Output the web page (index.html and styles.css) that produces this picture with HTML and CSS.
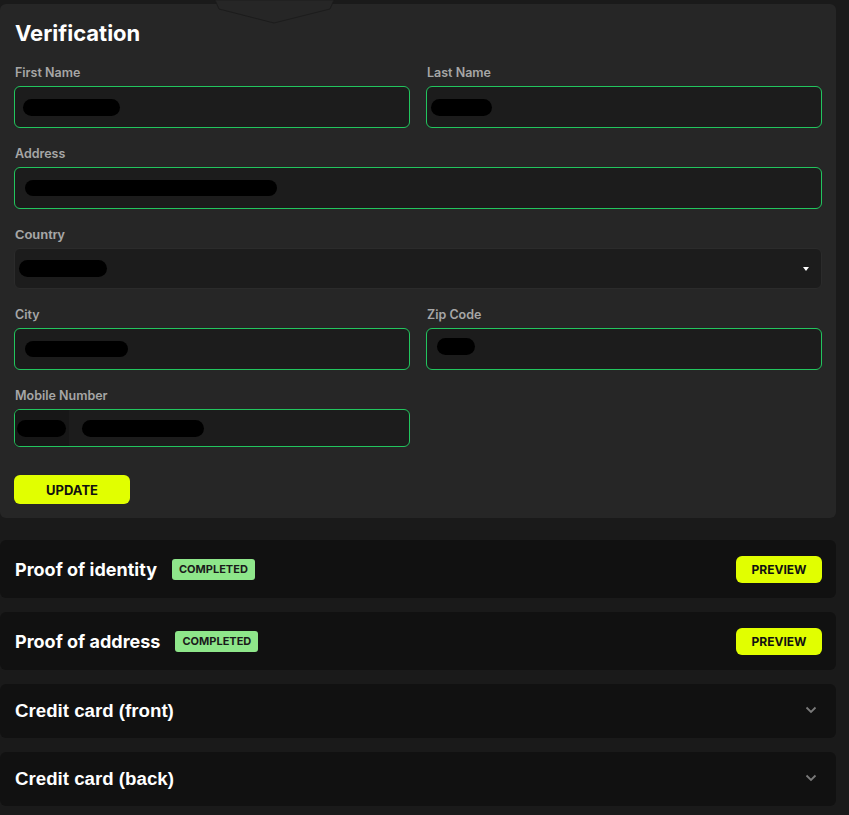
FILE: index.html
```html
<!DOCTYPE html>
<html lang="en">
<head>
    <meta charset="UTF-8">
    <meta name="viewport" content="width=device-width, initial-scale=1.0">
    <title>Verification</title>
    <link rel="stylesheet" href="styles.css">
</head>
<body>
    <div class="page">
        <div class="card">
            <svg class="notch" width="124" height="26" viewBox="0 0 124 26">
                <path d="M1 0 L5 9 L60 23 L116 9 L120 0 Z" fill="#262626" stroke="#1c1c1c" stroke-width="1"/>
            </svg>
            <h1>Verification</h1>

            <div class="grid">
                <div class="field">
                    <label>First Name</label>
                    <div class="input ok"><span class="mask" style="width:97px"></span></div>
                </div>
                <div class="field">
                    <label>Last Name</label>
                    <div class="input ok"><span class="mask m-tight" style="width:61px"></span></div>
                </div>
                <div class="field full">
                    <label>Address</label>
                    <div class="input ok"><span class="mask m-wide" style="width:252px"></span></div>
                </div>
                <div class="field full">
                    <label class="plain">Country</label>
                    <div class="input select">
                        <span class="mask m-left" style="width:88px"></span>
                        <span class="caret"></span>
                    </div>
                </div>
                <div class="field">
                    <label>City</label>
                    <div class="input ok"><span class="mask m-wide" style="width:103px"></span></div>
                </div>
                <div class="field">
                    <label>Zip Code</label>
                    <div class="input ok"><span class="mask m-zip" style="width:38px"></span></div>
                </div>
                <div class="field">
                    <label>Mobile Number</label>
                    <div class="input ok phone">
                        <div class="code"><span class="mask" style="width:49px"></span></div>
                        <span class="mask m-num" style="width:122px"></span>
                    </div>
                </div>
            </div>

            <button class="btn update">UPDATE</button>
        </div>

        <div class="row tall">
            <div class="row-left">
                <h2>Proof of identity</h2>
                <span class="badge">COMPLETED</span>
            </div>
            <button class="btn preview">PREVIEW</button>
        </div>
        <div class="row tall">
            <div class="row-left">
                <h2>Proof of address</h2>
                <span class="badge">COMPLETED</span>
            </div>
            <button class="btn preview">PREVIEW</button>
        </div>
        <div class="row">
            <h2 class="plain">Credit card (front)</h2>
            <svg class="chev" width="12" height="8" viewBox="0 0 12 8"><path d="M1.5 1.5 L6 6 L10.5 1.5" fill="none" stroke="#7a7a7a" stroke-width="1.8"/></svg>
        </div>
        <div class="row">
            <h2 class="plain">Credit card (back)</h2>
            <svg class="chev" width="12" height="8" viewBox="0 0 12 8"><path d="M1.5 1.5 L6 6 L10.5 1.5" fill="none" stroke="#7a7a7a" stroke-width="1.8"/></svg>
        </div>
    </div>
</body>
</html>
```

FILE: styles.css
```css
body {
    margin: 0;
    background: #1a1a1a;
    font-family: Inter, "Noto Sans", sans-serif;
    color: #fff;
}
.page {
    width: 836px;
    padding-top: 4px;
}
.card {
    position: relative;
    background: #262626;
    border-radius: 6px;
    padding: 15px 14px 14px;
}
.notch {
    position: absolute;
    left: 214px;
    top: -4px;
}
h1 {
    margin: 0 0 18px 1px;
    font-size: 22px;
    line-height: 28px;
    font-weight: 700;
}
.grid {
    display: grid;
    grid-template-columns: 1fr 1fr;
    column-gap: 16px;
    row-gap: 18px;
}
.field.full {
    grid-column: 1 / 3;
}
label {
    display: block;
    font-size: 12.5px;
    line-height: 16px;
    font-weight: 600;
    color: #a6a6a6;
    margin: 0 0 5px 1px;
}
label.plain {
    font-family: "Liberation Sans", Arial, sans-serif;
    font-size: 13px;
    font-weight: 700;
}
.input {
    height: 42px;
    box-sizing: border-box;
    background: #1c1c1c;
    border: 1px solid #2b2b2b;
    border-radius: 6px;
    display: flex;
    align-items: center;
    padding: 0 8px;
}
.input.ok {
    border-color: #22c55e;
}
.input.select {
    height: 41px;
    justify-content: space-between;
    padding: 0 12px 0 4px;
}
.mask {
    display: block;
    height: 17px;
    background: #000;
    border-radius: 9px;
}
.m-tight { margin-left: -4px; }
.m-wide { margin-left: 2px; height: 16px; }
.m-zip { margin-left: 2px; margin-top: -6px; }
.m-num { margin-left: 13px; }
.caret {
    width: 0;
    height: 0;
    border-left: 3px solid transparent;
    border-right: 3px solid transparent;
    border-top: 4px solid #fff;
}
.input.phone {
    height: 38px;
    padding: 0;
    overflow: hidden;
}
.code {
    width: 52px;
    align-self: stretch;
    background: #171717;
    display: flex;
    align-items: center;
    padding-left: 2px;
}
.btn {
    border: none;
    border-radius: 6px;
    background: #e1ff00;
    color: #111;
    font-family: Inter, sans-serif;
    font-weight: 700;
    cursor: pointer;
}
.update {
    margin-top: 28px;
    width: 116px;
    height: 29px;
    font-size: 13px;
    display: block;
}
.row {
    background: #111;
    border-radius: 6px;
    height: 54px;
    margin-top: 14px;
    padding: 0 19px 0 15px;
    display: flex;
    align-items: center;
    justify-content: space-between;
}
.row.tall {
    height: 58px;
    padding-right: 14px;
}
.card + .row {
    margin-top: 22px;
}
.row-left {
    display: flex;
    align-items: center;
}
h2 {
    margin: 0;
    font-size: 18px;
    font-weight: 700;
}
h2.plain {
    font-family: "Liberation Sans", Arial, sans-serif;
    font-size: 18.7px;
}
.badge {
    margin-left: 15px;
    background: #8ee68a;
    color: #1a1a1a;
    font-size: 11px;
    font-weight: 700;
    line-height: 21px;
    padding: 0 7px;
    border-radius: 3px;
}
.preview {
    width: 86px;
    height: 27px;
    font-size: 12px;
}
.chev {
    margin-top: -2px;
}
```
